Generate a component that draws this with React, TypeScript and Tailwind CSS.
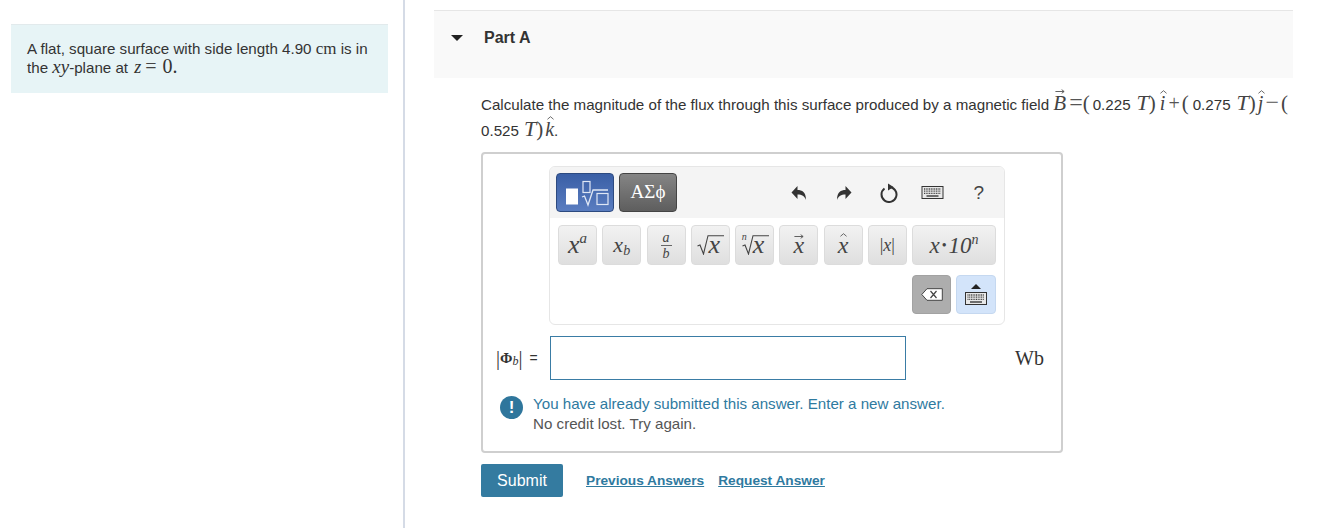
const serif = "font-['Liberation_Serif',serif]";

function Hat({ ch, arrow, className, markTop = "top-0" }: { ch: string; arrow?: boolean; className?: string; markTop?: string }) {
    return (
        <span className={`relative inline-block italic ${serif} ${className || ""}`}>
            {ch}
            {arrow ? (
                <svg viewBox="0 0 12 6" className={`absolute ${markTop} left-1/2 -ml-[5px] w-[10px] h-[5px]`}>
                    <path d="M0.500 3h10M8 0.800L11 3 8 5.200" fill="none" stroke="#444" strokeWidth="1" />
                </svg>
            ) : (
                <svg viewBox="0 0 8 4" className={`absolute ${markTop} left-1/2 -ml-[3px] w-[7px] h-[4px]`}>
                    <path d="M0.500 3.500L4 0.500l3.500 3" fill="none" stroke="#444" strokeWidth="0.900" />
                </svg>
            )}
        </span>
    );
}

function MathT() {
    return <span className={`italic text-[22px] text-[#444] ${serif}`}>T</span>;
}

function Paren({ c, className }: { c: string; className?: string }) {
    return <span className={`text-[21px] leading-none text-[#444] ${serif} ${className || ""}`}>{c}</span>;
}

function Radical({ index }: { index?: boolean }) {
    return (
        <span className="relative flex items-center text-[#444]">
            {index && <span className="absolute left-0 -top-[3px] italic text-[10px] leading-none">n</span>}
            <svg viewBox="0 0 28 20" className="w-[28px] h-5 absolute left-0 top-0">
                <path d="M0.500 11l2.500-1 3.500 9L11 0.700h16" fill="none" stroke="#444" strokeWidth="1.100" />
            </svg>
            <span className="italic text-[26px] leading-5 pl-[11px] pr-[3px] h-5">x</span>
        </span>
    );
}

function KeyboardIcon({ className }: { className?: string }) {
    return (
        <svg viewBox="0 0 22 13" className={className}>
            <rect x="0.500" y="0.500" width="21" height="12" fill="#e8e8e8" stroke="#333" strokeWidth="1" />
            <path d="M2.500 3h17M2.500 5.200h17M2.500 7.400h17" stroke="#444" strokeWidth="1.300" strokeDasharray="1 0.700" fill="none" />
            <path d="M5 10h12" stroke="#444" strokeWidth="1.300" fill="none" />
        </svg>
    );
}

function MathKey({ children, wide }: { children: React.ReactNode; wide?: boolean }) {
    return (
        <button className={`${wide ? "w-[84px]" : "w-[39px]"} h-10 shrink-0 flex items-center justify-center rounded-[4px] border border-[#dcdcdc] bg-gradient-to-b from-[#f2f2f2] to-[#dfdfdf] text-[#333] ${serif}`}>
            {children}
        </button>
    );
}

export default function App() {
    return (
        <div className="w-[1338px] h-[528px] overflow-hidden bg-white flex font-['Liberation_Sans',sans-serif] text-[15.150px] text-[#333]">
            {/* Left intro */}
            <div className="w-[405px] h-full shrink-0 border-r-2 border-[#d5dbe6] pt-6 pl-[11px]">
                <div className="w-[377px] h-[69px] bg-[#e7f4f6] border-t border-[#e2eaec] pl-4 pt-[14px] leading-[19px]">
                    <p className="whitespace-nowrap">
                        A flat, square surface with side length 4.90 <span className={`text-[17px] ${serif}`}>cm</span> is in
                    </p>
                    <p className="whitespace-nowrap flex items-baseline -mt-px">
                        <span>the&nbsp;</span>
                        <span className={`italic text-[19px] leading-[19px] ${serif}`}>xy</span>
                        <span>-plane at&nbsp;</span>
                        <span className={`italic text-[18px] leading-[19px] ml-[2px] ${serif}`}>z</span>
                        <span className={`text-[20px] leading-[19px] text-[#444] ml-[4px] ${serif}`}>=</span>
                        <span className={`text-[20px] leading-[19px] ml-[6px] ${serif}`}>0.</span>
                    </p>
                </div>
            </div>

            {/* Right part */}
            <div className="flex-1 pt-[10px] pl-[29px] pr-[45px]">
                <div className="h-[68px] bg-[#f9f9f9] border-t border-[#e6e6e6] flex items-start pt-[17px] pl-[17px]">
                    <svg viewBox="0 0 12 6" className="w-3 h-[6px] mt-[7px] fill-[#222]">
                        <path d="M0 0h12L6 6z" />
                    </svg>
                    <span className="ml-[21px] font-bold text-[16px] text-[#333] leading-[19px]">Part A</span>
                </div>

                <div className="pl-[47px]">
                    <div className="pt-[11px] h-[72px] leading-[26px] whitespace-nowrap">
                        <p className="h-[27px] flex items-baseline">
                            <span>Calculate the magnitude of the flux through this surface produced by a magnetic field&nbsp;</span>
                            <Hat ch="B" arrow markTop="-top-[1px]" className="text-[21px] text-[#444] leading-[26px]" />
                            <span className={`text-[24px] leading-[26px] text-[#555] ml-[3px] ${serif}`}>=</span>
                            <Paren c="(" />
                            <span className="ml-[3px]">0.225</span>
                            <span className="ml-[6px]"><MathT /></span>
                            <Paren c=")" />
                            <Hat ch="i" className="text-[20px] text-[#444] ml-[4px] leading-[26px]" />
                            <span className={`text-[20px] text-[#555] ml-[3px] ${serif}`}>+</span>
                            <Paren c="(" className="ml-[2px]" />
                            <span className="ml-[4px]">0.275</span>
                            <span className="ml-[6px]"><MathT /></span>
                            <Paren c=")" />
                            <Hat ch="j" className="text-[20px] text-[#444] ml-[2px] leading-[26px]" />
                            <span className={`text-[24px] leading-[26px] text-[#555] ml-[2px] ${serif}`}>−</span>
                            <Paren c="(" className="ml-[2px]" />
                        </p>
                        <p className="h-[26px] flex items-baseline">
                            <span>0.525</span>
                            <span className="ml-[5px]"><MathT /></span>
                            <Paren c=")" />
                            <Hat ch="k" className="text-[20px] text-[#444] ml-[2px] leading-[26px]" />
                            <span>.</span>
                        </p>
                    </div>

                    {/* Answer box */}
                    <div className="w-[582px] h-[301px] border-2 border-[#cfcfcf] rounded-[4px] mt-[2px]">
                        {/* Math palette */}
                        <div className="ml-[66px] mt-3 w-[456px] h-[159px] border border-[#e6e6e6] rounded-[6px] overflow-hidden bg-white">
                            <div className="h-[51px] bg-[#f4f4f4] flex items-center pl-[6px] pr-[20px]">
                                <button className="w-[58px] h-[39px] rounded-[4px] border border-[#2d4a80] bg-gradient-to-b from-[#3a5fa6] to-[#5a7dc0] flex items-center justify-center">
                                    <svg viewBox="0 0 48 30" className="w-[48px] h-[30px]">
                                        <rect x="5" y="10.500" width="12" height="16" fill="#fff" />
                                        <rect x="22" y="3.500" width="7" height="11" fill="none" stroke="#dfe7f5" strokeWidth="1.200" />
                                        <path d="M21 19l2.500-1 3.500 9 5-15h15" fill="none" stroke="#dfe7f5" strokeWidth="1.300" />
                                        <rect x="36" y="15.500" width="11" height="11" fill="none" stroke="#dfe7f5" strokeWidth="1.200" />
                                    </svg>
                                </button>
                                <button className={`ml-[5px] w-[58px] h-[39px] rounded-[4px] border border-[#444] bg-gradient-to-b from-[#858585] to-[#5e5e5e] text-white text-[19px] ${serif}`}>
                                    ΑΣϕ
                                </button>
                                <div className="ml-auto flex items-center">
                                    <svg viewBox="0 0 16 16" className="w-4 h-4 fill-[#333]">
                                        <path d="M6.500 1v4C11 5 15 7 15 15c-1.500-4-4-5.500-8.500-5.500V14L0.500 7.500z" />
                                    </svg>
                                    <svg viewBox="0 0 16 16" className="w-4 h-4 ml-[29px] fill-[#333]">
                                        <path d="M9.500 1v4C5 5 1 7 1 15c1.500-4 4-5.500 8.500-5.500V14l6-6.500z" />
                                    </svg>
                                    <svg viewBox="0 0 20 20" className="w-5 h-5 ml-[27px]">
                                        <path d="M10 4a7.500 7.500 0 1 1-4.500 1.500" fill="none" stroke="#333" strokeWidth="2" />
                                        <path d="M9 0.500L14.500 4 9 7.500z" fill="#333" />
                                    </svg>
                                    <KeyboardIcon className="w-[23px] h-[13px] ml-[22px]" />
                                    <span className="ml-[29px] text-[19px] text-[#444] leading-none">?</span>
                                </div>
                            </div>

                            <div className="pl-2 pt-[7px] flex gap-[5.250px]">
                                <MathKey>
                                    <span className="flex items-start italic text-[26px] leading-[26px] text-[#444]">
                                        x<span className="text-[15px] leading-[15px] -mt-[1px]">a</span>
                                    </span>
                                </MathKey>
                                <MathKey>
                                    <span className="flex items-end italic text-[22px] leading-[22px] text-[#444]">
                                        x<span className="text-[14px] leading-[14px] -mb-[2px]">b</span>
                                    </span>
                                </MathKey>
                                <MathKey>
                                    <span className="flex flex-col items-center italic text-[14px] leading-[13px] text-[#444]">
                                        <span>a</span>
                                        <span className="w-[11px] h-px bg-[#666] my-[1px]" />
                                        <span>b</span>
                                    </span>
                                </MathKey>
                                <MathKey>
                                    <Radical />
                                </MathKey>
                                <MathKey>
                                    <Radical index />
                                </MathKey>
                                <MathKey>
                                    <Hat ch="x" arrow markTop="top-[4px]" className="text-[24px] leading-[30px] text-[#444]" />
                                </MathKey>
                                <MathKey>
                                    <Hat ch="x" markTop="top-[3px]" className="text-[24px] leading-[30px] text-[#444]" />
                                </MathKey>
                                <MathKey>
                                    <span className="text-[18px] text-[#444]">|<span className="italic">x</span>|</span>
                                </MathKey>
                                <MathKey wide>
                                    <span className="flex items-start italic text-[23px] leading-[23px] text-[#444]">
                                        x<span className="not-italic mx-[2px] text-[14px] leading-[23px]">•</span>10<span className="text-[14px] leading-[14px] -mt-[1px]">n</span>
                                    </span>
                                </MathKey>
                            </div>

                            <div className="pt-[10px] pr-2 flex justify-end gap-[5px]">
                                <button className="w-[39px] h-[39px] rounded-[4px] bg-[#adadad] border border-[#a2a2a2] flex items-center justify-center">
                                    <svg viewBox="0 0 22 13" className="w-[22px] h-[13px]">
                                        <path d="M6 0.700h15.300v11.600H6L0.800 6.500z" fill="#fff" stroke="#444" strokeWidth="1" />
                                        <path d="M9.500 3l6 7m0-7l-6 7" stroke="#444" strokeWidth="1.200" fill="none" />
                                    </svg>
                                </button>
                                <button className="w-[40px] h-[39px] rounded-[4px] bg-[#d3e4fa] border border-[#c5d8f0] flex flex-col items-center justify-center">
                                    <svg viewBox="0 0 10 5" className="w-[10px] h-[5px] fill-[#222] mb-[3px]">
                                        <path d="M5 0l5 5H0z" />
                                    </svg>
                                    <KeyboardIcon className="w-[22px] h-[13px]" />
                                </button>
                            </div>
                        </div>

                        {/* Input row */}
                        <div className="mt-[11px] h-[44px] flex items-center pl-[13px] pr-[17px]">
                            <span className={`w-[54px] shrink-0 flex items-center text-[#333] ${serif}`}>
                                <span className="text-[20px] leading-none">|</span>
                                <span className="text-[15px] font-bold">Φ</span>
                                <span className="italic text-[12px] mt-[6px]">b</span>
                                <span className="text-[20px] leading-none">|</span>
                                <span className="text-[14px] ml-[7px] font-['Liberation_Sans',sans-serif]">=</span>
                            </span>
                            <input type="text" className="w-[356px] h-[44px] border border-[#3a7ca5] bg-white outline-none" />
                            <span className={`ml-auto text-[20px] text-[#333] ${serif}`}>Wb</span>
                        </div>

                        {/* Feedback */}
                        <div className="mt-[14px] pl-[17px] flex">
                            <span className="w-[23px] h-[23px] mt-[2px] shrink-0 rounded-full bg-[#2f769c] flex items-center justify-center text-white font-bold text-[17px] leading-none">!</span>
                            <div className="ml-[10px] leading-5">
                                <p className="text-[#2f7a9f]">You have already submitted this answer. Enter a new answer.</p>
                                <p className="text-[#555]">No credit lost. Try again.</p>
                            </div>
                        </div>
                    </div>

                    {/* Actions */}
                    <div className="mt-[11px] flex items-center">
                        <button className="w-[82px] h-[33px] rounded-[2px] bg-[#347ba0] text-white text-[16px]">Submit</button>
                        <a className="ml-[23px] mt-px font-bold text-[13.700px] text-[#2f7a9f] underline">Previous Answers</a>
                        <a className="ml-[14px] mt-px font-bold text-[13.700px] text-[#2f7a9f] underline">Request Answer</a>
                    </div>
                </div>
            </div>
        </div>
    );
}
